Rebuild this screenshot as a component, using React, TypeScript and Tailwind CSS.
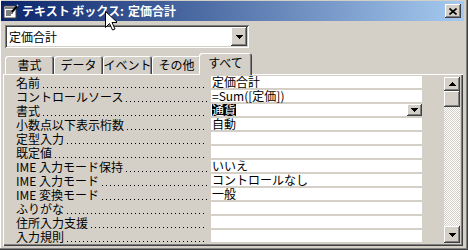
import React from "react";

interface PropRow {
  label: string;
  value: string;
  select?: boolean;
}

const rows: PropRow[] = [
  { label: "名前", value: "定価合計" },
  { label: "コントロールソース", value: "=Sum([定価])" },
  { label: "書式", value: "通貨", select: true },
  { label: "小数点以下表示桁数", value: "自動" },
  { label: "定型入力", value: "" },
  { label: "既定値", value: "" },
  { label: "IME 入力モード保持", value: "いいえ" },
  { label: "IME 入力モード", value: "コントロールなし" },
  { label: "IME 変換モード", value: "一般" },
  { label: "ふりがな", value: "" },
  { label: "住所入力支援", value: "" },
  { label: "入力規則", value: "" },
];

const tabs = ["書式", "データ", "イベント", "その他"];

const raised =
  "bg-[#d4d0c8] shadow-[inset_-1px_-1px_#404040,inset_1px_1px_#ffffff,inset_-2px_-2px_#808080,inset_2px_2px_#d4d0c8]";

function Arrow({ up = false }: { up?: boolean }) {
  return (
    <svg width="7" height="4" viewBox="0 0 7 4">
      {up ? (
        <path d="M3 0h1v1h1v1h1v1h1v1H0V3h1V2h1V1h1z" fill="#000" />
      ) : (
        <path d="M0 0h7v1H6v1H5v1H4v1H3V3H2V2H1V1H0z" fill="#000" />
      )}
    </svg>
  );
}

function TitleIcon() {
  return (
    <svg width="16" height="16" viewBox="0 0 16 16">
      <rect x="1" y="3" width="12" height="12" fill="#ffffff" stroke="#404040" />
      <rect x="2" y="4" width="10" height="2" fill="#808080" />
      <path d="M3 8h7M3 10h7M3 12h5" stroke="#000" />
      <path d="M9 9l5-6" stroke="#000" strokeWidth="2" />
      <path d="M14 3l1-1" stroke="#c0c0c0" strokeWidth="2" />
    </svg>
  );
}

export default function App() {
  return (
    <div className="relative w-[468px] h-[250px] bg-[#d4d0c8] flex flex-col font-['Noto_Sans_CJK_JP',sans-serif] text-black shadow-[inset_-1px_-1px_#404040,inset_-2px_-2px_#808080,inset_1px_0_#ffffff] overflow-hidden">
      {/* title bar */}
      <div className="ml-[1px] mt-[1px] w-[463px] h-[20px] flex items-center bg-[linear-gradient(to_right,#0a246a,#a6caf0)]">
        <div className="ml-[2px] w-[16px] h-[16px]">
          <TitleIcon />
        </div>
        <span className="ml-[3px] text-[12px] leading-[20px] font-bold text-white whitespace-nowrap">
          テキスト ボックス:
        </span>
        <span className="ml-[4px] text-[12px] leading-[20px] font-bold text-white whitespace-nowrap">
          定価合計
        </span>
        <div className="flex-1" />
        <div className={`mr-[3px] w-[16px] h-[14px] flex items-center justify-center ${raised}`}>
          <svg width="8" height="7" viewBox="0 0 8 7">
            <path d="M0.5 0.5l7 6M7.5 0.5l-7 6" stroke="#000" strokeWidth="1.6" />
          </svg>
        </div>
      </div>

      {/* object combo */}
      <div className="ml-[5px] mt-[4px] w-[244px] h-[23px] bg-white flex items-stretch p-[2px] shadow-[inset_1px_1px_#808080,inset_-1px_-1px_#ffffff,inset_2px_2px_#404040,inset_-2px_-2px_#d4d0c8]">
        <span className="flex-1 pl-[2px] text-[12px] leading-[19px]">定価合計</span>
        <div className={`w-[16px] flex items-center justify-center ${raised}`}>
          <Arrow />
        </div>
      </div>

      {/* tabs */}
      <div className="mt-[5px] ml-[5px] h-[21px] flex items-end">
        {tabs.map((t) => (
          <div
            key={t}
            className="w-[49px] h-[18px] flex items-center justify-center text-[12px] rounded-t-[3px] shadow-[inset_1px_1px_#ffffff,inset_-1px_0_#404040,inset_-2px_0_#808080]"
          >
            {t}
          </div>
        ))}
        <div className="relative z-10 -ml-[2px] mb-[-1px] w-[53px] h-[22px] flex items-center justify-center text-[12px] pb-[2px] bg-[#d4d0c8] rounded-t-[3px] shadow-[inset_1px_1px_#ffffff,inset_-1px_0_#404040,inset_-2px_0_#808080]">
          すべて
        </div>
      </div>

      {/* tab page */}
      <div className="ml-[3px] w-[460px] h-[172px] p-[2px] flex shadow-[inset_1px_1px_#ffffff,inset_-1px_-1px_#404040,inset_-2px_-2px_#808080]">
        <div className="flex flex-col w-[417px]">
          {rows.map((r) => (
            <div key={r.label} className="flex h-[14px]">
              <div className="w-[206px] flex items-end pl-[11px] pr-[4px]">
                <span className="text-[12px] leading-[14px] whitespace-nowrap">{r.label}</span>
                <div className="flex-1 h-px mb-[2px] ml-[3px] bg-[linear-gradient(to_right,#000000_1px,transparent_1px)] bg-[length:4px_1px] bg-repeat-x" />
              </div>
              <div className="w-[211px] h-[12px] bg-white flex items-center text-[12px] leading-[12px] whitespace-nowrap">
                {r.select ? (
                  <>
                    <span className="ml-[1px] h-[12px] inline-block bg-black text-white leading-[12px]">
                      {r.value}
                    </span>
                    <div className="flex-1" />
                    <div className={`w-[15px] h-[12px] flex items-center justify-center ${raised}`}>
                      <Arrow />
                    </div>
                  </>
                ) : (
                  <span className="ml-[1px]">{r.value}</span>
                )}
              </div>
            </div>
          ))}
        </div>
        <div className="w-[22px]" />
        {/* scrollbar */}
        <div className="mt-[1px] w-[16px] h-[166px] flex flex-col">
          <div className={`h-[14px] flex items-center justify-center ${raised}`}>
            <Arrow up />
          </div>
          <div className={`h-[16px] ${raised}`} />
          <div className="flex-1 bg-[repeating-conic-gradient(#d4d0c8_0%_25%,#ffffff_0%_50%)] bg-[length:2px_2px]" />
          <div className={`h-[17px] flex items-center justify-center ${raised}`}>
            <Arrow />
          </div>
        </div>
      </div>

      {/* mouse pointer over the title */}
      <svg className="absolute left-[105px] top-[11px]" width="12" height="20" viewBox="0 0 12 20">
        <path
          d="M0.5 0.5v16l4-4 3 6.5 2.5-1-3-6.5h5.5z"
          fill="#ffffff"
          stroke="#000000"
          strokeWidth="1"
        />
      </svg>
    </div>
  );
}
